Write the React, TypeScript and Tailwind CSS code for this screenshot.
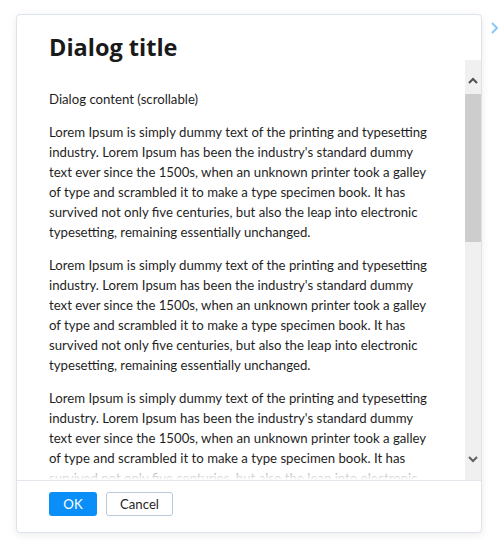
import React from "react";

const lorem =
  "Lorem Ipsum is simply dummy text of the printing and typesetting industry. Lorem Ipsum has been the industry's standard dummy text ever since the 1500s, when an unknown printer took a galley of type and scrambled it to make a type specimen book. It has survived not only five centuries, but also the leap into electronic typesetting, remaining essentially unchanged.";

const App: React.FC = () => {
  return (
    <div className="relative w-[498px] h-[552px] bg-white overflow-hidden font-['Lato',sans-serif] text-[#1f1f1f]">
      {/* stray chevron from the page behind */}
      <svg
        className="absolute left-[489px] top-[21px]"
        width="10"
        height="14"
        viewBox="0 0 10 14"
        fill="none"
      >
        <path d="M3 2l5 5-5 5" stroke="#8cc8f5" strokeWidth="2" />
      </svg>

      <div className="pt-[14px] pl-[16px]">
        <div className="w-[466px] h-[519px] flex flex-col bg-white border border-[#dde3ea] rounded-[4px] shadow-[0_2px_8px_rgba(0,0,0,0.08)]">
          {/* Header */}
          <div className="h-[45px] px-[32px] pt-[16px]">
            <h2 className="text-[23.5px] leading-[32px] font-bold text-[#1a1a1a] font-['Open_Sans',sans-serif]">Dialog title</h2>
          </div>

          {/* Body */}
          <div className="flex-1 flex min-h-0">
            <div className="relative flex-1 overflow-hidden pl-[32px] pr-[30px] pt-[29px] text-[13.2px] leading-[20px]">
              <p className="mb-[13px]">Dialog content (scrollable)</p>
              <p className="mb-[13px]">{lorem}</p>
              <p className="mb-[13px]">{lorem}</p>
              <p className="mb-[13px]">{lorem}</p>
              <div className="absolute left-0 right-0 bottom-0 h-[12px] bg-gradient-to-b from-white/40 to-white" />
            </div>

            {/* Scrollbar */}
            <div className="w-[16px] bg-[#f0f0f0] flex flex-col">
              <div className="h-[34px] flex items-end justify-center pb-[10px]">
                <svg width="10" height="7" viewBox="0 0 10 7">
                  <path d="M1 6l4-4 4 4" stroke="#505050" strokeWidth="2" fill="none" />
                </svg>
              </div>
              <div className="h-[148px] bg-[#cdcdcd]" />
              <div className="flex-1" />
              <div className="h-[34px] flex items-start justify-center pt-[10px]">
                <svg width="10" height="7" viewBox="0 0 10 7">
                  <path d="M1 1l4 4 4-4" stroke="#606060" strokeWidth="2" fill="none" />
                </svg>
              </div>
            </div>
          </div>

          {/* Footer */}
          <div className="h-[52px] border-t border-[#e3e7ec] px-[32px] flex items-start pt-[11px] gap-[9px]">
            <button className="h-[24px] w-[48px] rounded-[3px] bg-[#0a8ef7] text-white text-[13.2px] leading-[20px]">OK</button>
            <button className="h-[24px] w-[67px] rounded-[3px] border border-[#b8cadb] bg-white text-[13.2px] leading-[20px] text-[#1f1f1f]">
              Cancel
            </button>
          </div>
        </div>
      </div>
    </div>
  );
};

export default App;
